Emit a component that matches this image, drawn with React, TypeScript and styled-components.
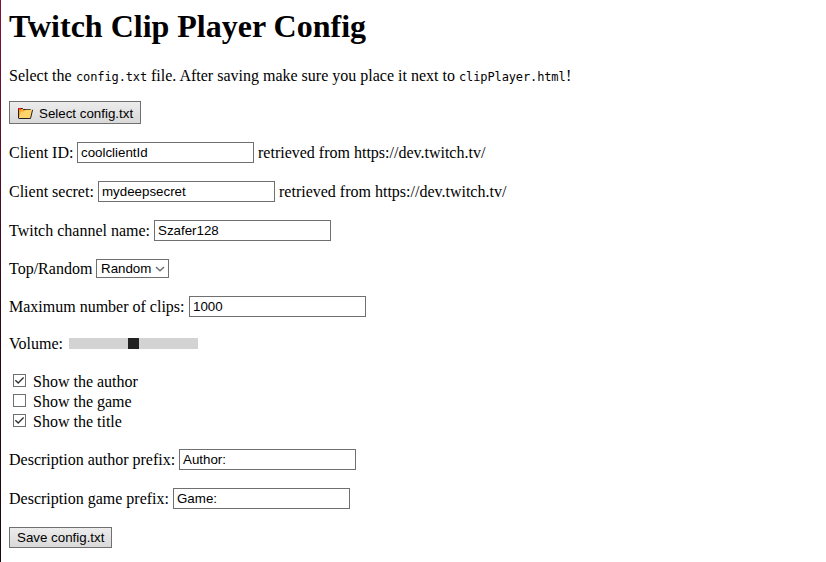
import React, { useState } from "react";
import styled, { createGlobalStyle } from "styled-components";

const GlobalStyle = createGlobalStyle`
  * { box-sizing: border-box; }
  body { margin: 0; background: #fff; overflow: hidden; }
`;

const Page = styled.main`
  display: flex;
  flex-direction: column;
  align-items: flex-start;
  width: 826px;
  height: 562px;
  padding-left: 9px;
  background: linear-gradient(#84123b, #5c0d2c 25%, #2b0718 60%, #1c0610) left / 1px 100% no-repeat #fff;
  color: #000;
  font: 16px/18px "Liberation Serif", "Times New Roman", serif;
  white-space: pre;
`;

const Title = styled.h1`
  margin: 8px 0 0;
  height: 37px;
  font-size: 32px;
  line-height: 37px;
  font-weight: bold;
`;

const Intro = styled.p`
  display: flex;
  align-items: baseline;
  margin: 22px 0 0;
  height: 18px;
`;

const Text = styled.span<{ $width: number }>`
  flex: none;
  width: ${(p) => p.$width}px;
`;

const Code = styled.code<{ $width: number }>`
  flex: none;
  width: ${(p) => p.$width}px;
  font: 12px/18px "DejaVu Sans Mono", monospace;
  letter-spacing: -0.12px;
`;

const Row = styled.div<{ $gap: number; $height?: number }>`
  display: flex;
  flex: none;
  align-items: center;
  margin-top: ${(p) => p.$gap}px;
  height: ${(p) => p.$height ?? 21}px;
`;

const Input = styled.input`
  width: 177px;
  height: 21px;
  margin: 0;
  padding: 1px 3px;
  border: 1px solid #707070;
  border-radius: 0;
  outline: none;
  background: #fff;
  color: #000;
  font: 13.333px "Liberation Sans", Arial, sans-serif;
`;

const Hint = styled.span`
  margin-left: 4px;
`;

const Button = styled.button<{ $width: number; $height: number; $drop?: number }>`
  display: flex;
  flex: none;
  align-items: center;
  width: ${(p) => p.$width}px;
  height: ${(p) => p.$height}px;
  padding: ${(p) => p.$drop ?? 0}px 0 0 7px;
  border: 1px solid #707070;
  border-radius: 0;
  background: linear-gradient(#ececec, #d9d9d9);
  color: #000;
  font: 13.333px "Liberation Sans", Arial, sans-serif;
  white-space: pre;
`;

const FolderIcon = styled.svg`
  flex: none;
  width: 17px;
  height: 13px;
  margin: 0 5px 0 0;
`;

const SelectBox = styled.div`
  display: flex;
  align-items: center;
  justify-content: space-between;
  width: 73px;
  height: 19px;
  padding: 0 3px 0 4px;
  border: 1px solid #707070;
  background: #fff;
  font: 13.333px "Liberation Sans", Arial, sans-serif;
`;

const Slider = styled.input`
  appearance: none;
  width: 129px;
  height: 11px;
  margin: 0;
  border-radius: 0;
  background: #d3d3d3;
  &::-webkit-slider-thumb {
    appearance: none;
    width: 11px;
    height: 11px;
    border-radius: 0;
    background: #222;
  }
`;

const VolumeLabel = styled(Text)`
  padding-top: 1px;
`;

const CheckLabel = styled.label`
  display: flex;
  flex: none;
  align-items: center;
  height: 20px;
  padding-left: 4px;
`;

const Box = styled.button`
  display: flex;
  width: 13px;
  height: 13px;
  margin: 0 7px 3px 0;
  padding: 0;
  border: 1px solid #707070;
  background: #fff;
`;

const Checks = styled.div`
  display: flex;
  flex-direction: column;
  margin-top: 18px;
`;

function Field(props: { label: string; width: number; value: string; gap: number; hint?: string }) {
  return (
    <Row $gap={props.gap}>
      <Text $width={props.width}>{props.label}</Text>
      <Input defaultValue={props.value} spellCheck={false} />
      {props.hint && <Hint>{props.hint}</Hint>}
    </Row>
  );
}

function CheckItem({ label, initial }: { label: string; initial: boolean }) {
  const [checked, setChecked] = useState(initial);
  return (
    <CheckLabel>
      <Box type="button" role="checkbox" aria-checked={checked} onClick={() => setChecked(!checked)}>
        {checked && (
          <svg width="11" height="11" viewBox="0 0 11 11" fill="none">
            <path d="M1.4 5.3 4.2 8.1 9.6 2.5" stroke="#333" strokeWidth="1.4" />
          </svg>
        )}
      </Box>
      {label}
    </CheckLabel>
  );
}

export default function App() {
  return (
    <>
      <GlobalStyle />
      <Page>
        <Title>Twitch Clip Player Config</Title>
        <Intro>
          <Text $width={67}>Select the</Text>
          <Code $width={75}>config.txt</Code>
          <Text $width={308}>file. After saving make sure you place it next to</Text>
          <Code $width={107}>clipPlayer.html</Code>
          <span>!</span>
        </Intro>
        <Row $gap={16} $height={23}>
          <Button $width={132} $height={23} $drop={2}>
            <FolderIcon viewBox="0 0 17 13" aria-hidden="true">
              <path d="M1.5 11V1.5H5.5L6.5 2.5H13.5V4" fill="#f5a623" stroke="#222" />
              <path d="M2 11.5 3.8 4.5H7L8.5 2.8H15.6L13.5 11.5Z" fill="#ffd36b" />
              <path d="M1.5 11.5H13.5L15.6 2.8" fill="none" stroke="#222" strokeLinejoin="round" />
              <path d="M1 1H4V2.5H1Z" fill="#e81123" />
            </FolderIcon>
            Select config.txt
          </Button>
        </Row>
        <Field gap={18} label="Client ID:" width={68} value="coolclientId" hint="retrieved from https://dev.twitch.tv/" />
        <Field gap={18} label="Client secret:" width={89} value="mydeepsecret" hint="retrieved from https://dev.twitch.tv/" />
        <Field gap={18} label="Twitch channel name:" width={145} value="Szafer128" />
        <Row $gap={18} $height={19}>
          <Text $width={87}>Top/Random</Text>
          <SelectBox role="combobox" aria-expanded="false">
            Random
            <svg width="10" height="8" viewBox="0 0 10 8" fill="none">
              <path d="M1 2 5 5.8 9 2" stroke="#707070" strokeWidth="1.5" />
            </svg>
          </SelectBox>
        </Row>
        <Field gap={18} label="Maximum number of clips:" width={180} value="1000" />
        <Row $gap={16}>
          <VolumeLabel $width={60}>Volume:</VolumeLabel>
          <Slider type="range" min="0" max="100" defaultValue="50" />
        </Row>
        <Checks>
          <CheckItem label="Show the author" initial={true} />
          <CheckItem label="Show the game" initial={false} />
          <CheckItem label="Show the title" initial={true} />
        </Checks>
        <Field gap={17} label="Description author prefix:" width={170} value="Author:" />
        <Field gap={18} label="Description game prefix:" width={164} value="Game:" />
        <Row $gap={18}>
          <Button $width={103} $height={21}>Save config.txt</Button>
        </Row>
      </Page>
    </>
  );
}
